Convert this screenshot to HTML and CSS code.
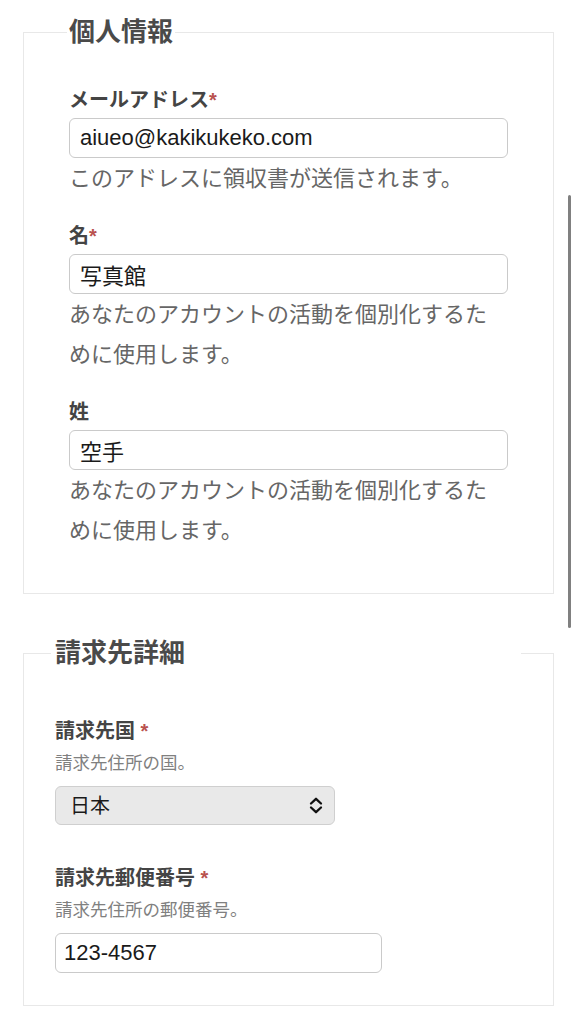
FILE: index.html
```html
<!DOCTYPE html>
<html>
<head>
    <title>お支払い情報</title>
    <meta charset="utf-8" />
    <link rel="stylesheet" href="styles.css">
</head>
<body>
    <div class="page">
        <fieldset class="group personal">
            <legend>個人情報</legend>
            <div class="field">
                <label class="label" for="email">メールアドレス<span class="req">*</span></label>
                <input class="text" type="email" id="email" value="aiueo@kakikukeko.com">
                <p class="help">このアドレスに領収書が送信されます。</p>
            </div>
            <div class="field">
                <label class="label" for="first">名<span class="req">*</span></label>
                <input class="text" type="text" id="first" value="写真館">
                <p class="help">あなたのアカウントの活動を個別化するために使用します。</p>
            </div>
            <div class="field">
                <label class="label" for="last">姓</label>
                <input class="text" type="text" id="last" value="空手">
                <p class="help">あなたのアカウントの活動を個別化するために使用します。</p>
            </div>
        </fieldset>

        <fieldset class="group billing">
            <legend>請求先詳細</legend>
            <div class="field">
                <label class="label" for="country">請求先国 <span class="req">*</span></label>
                <p class="hint">請求先住所の国。</p>
                <div class="select-wrap">
                    <select class="select" id="country">
                        <option>日本</option>
                    </select>
                    <svg class="chevron" width="14" height="17" viewBox="0 0 14 17">
                        <path d="M2 6.5 L7 1.8 L12 6.5 M2 10.5 L7 15.2 L12 10.5" fill="none" stroke="#111" stroke-width="2.3" stroke-linecap="round" stroke-linejoin="round"/>
                    </svg>
                </div>
            </div>
            <div class="field">
                <label class="label" for="zip">請求先郵便番号 <span class="req">*</span></label>
                <p class="hint">請求先住所の郵便番号。</p>
                <input class="text zip" type="text" id="zip" value="123-4567">
            </div>
        </fieldset>
    </div>
    <div class="scrollbar"></div>
</body>
</html>
```

FILE: styles.css
```css
body {
    margin: 0;
    padding: 0;
    background-color: #fff;
    font-family: 'Liberation Sans', 'Noto Sans CJK JP', sans-serif;
    color: #444;
}
.page {
    padding: 17px 22px 0 23px;
}
.group {
    margin: 0;
    border: 1px solid #e8e8e8;
    min-width: 0;
}
.group legend {
    font-size: 26px;
    line-height: 30px;
    font-weight: bold;
    color: #4a4a4a;
}
.personal {
    padding: 39px 45px 42px 45px;
}
.personal legend {
    padding: 0 2px;
    margin-left: -2px;
}
.billing {
    margin-top: 44px;
    padding: 49px 31px 32px 31px;
}
.billing legend {
    box-sizing: border-box;
    width: 470px;
    padding: 0 0 0 4px;
    margin-left: -4px;
}
.field + .field {
    margin-top: 23px;
}
.billing .field + .field {
    margin-top: 39px;
}
.label {
    display: block;
    font-size: 20px;
    line-height: 28px;
    font-weight: bold;
    color: #444;
    margin-bottom: 4px;
}
.req {
    color: #b9524f;
}
.text {
    display: block;
    box-sizing: border-box;
    width: 100%;
    height: 40px;
    padding: 0 10px;
    font-family: 'Liberation Sans', 'Noto Sans CJK JP', sans-serif;
    font-size: 22px;
    color: #1a1a1a;
    background-color: #fff;
    border: 1px solid #cacaca;
    border-radius: 6px;
    outline: none;
}
.help {
    margin: 1px 0 0 0;
    font-size: 22px;
    line-height: 40px;
    color: #666;
}
.hint {
    margin: 6px 0 11px 0;
    font-size: 17.5px;
    line-height: 24px;
    color: #808080;
}
.select-wrap {
    position: relative;
    width: 280px;
}
.select {
    display: block;
    box-sizing: border-box;
    width: 100%;
    height: 39px;
    padding: 0 14px;
    font-family: 'Liberation Sans', 'Noto Sans CJK JP', sans-serif;
    font-size: 20px;
    color: #1a1a1a;
    background-color: #e9e9e9;
    border: 1px solid #cfcfcf;
    border-radius: 6px;
    -webkit-appearance: none;
    appearance: none;
}
.chevron {
    position: absolute;
    right: 12px;
    top: 11px;
}
.zip {
    width: 327px;
    padding: 0 8px;
}
.scrollbar {
    position: fixed;
    right: 5px;
    top: 195px;
    width: 3px;
    height: 433px;
    border-radius: 2px;
    background-color: #808080;
}
```
